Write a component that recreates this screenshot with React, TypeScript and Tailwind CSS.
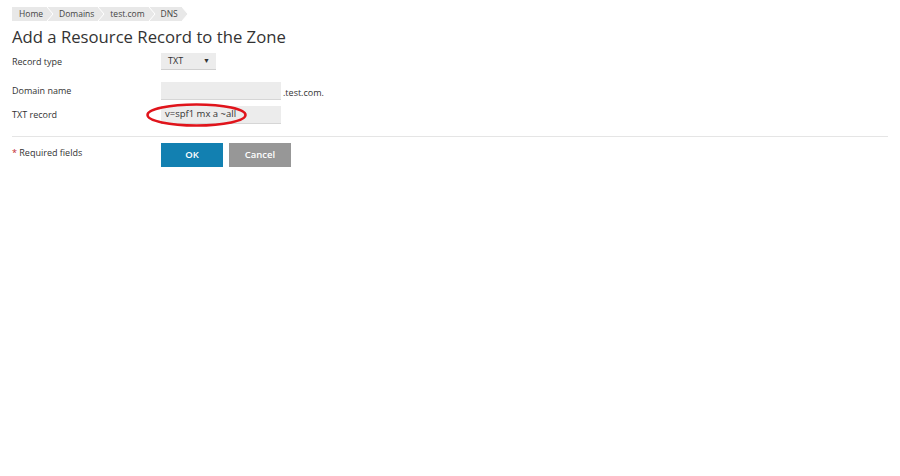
const crumbs = ['Home', 'Domains', 'test.com', 'DNS'];

function Breadcrumbs() {
  return (
    <div className="flex h-[14px] items-stretch">
      {crumbs.map((c, i) => (
        <div key={c} className={'relative flex items-center bg-[#e8e8e8] text-[8.5px] text-[#444] ' + (i === 0 ? 'pl-[7px] pr-[5px]' : 'pl-[11px] pr-[5px]')}>
          {c}
          <svg className="absolute -right-[6px] top-0 z-10" width="7" height="14" viewBox="0 0 7 14">
            <polygon points="0,0 6,7 0,14" fill="#e8e8e8" />
            <polyline points="0,0 6,7 0,14" fill="none" stroke="#fff" strokeWidth="1" />
          </svg>
        </div>
      ))}
    </div>
  );
}

export default function App() {
  return (
    <div className="h-[476px] w-[900px] bg-white px-[12px] pt-[7px] font-['Open_Sans',sans-serif] text-[#333]">
      <Breadcrumbs />
      <h1 className="mt-[4px] text-[16.7px] leading-[24px] text-[#333]">Add a Resource Record to the Zone</h1>

      <div className="mt-[4px] flex items-center">
        <span className="w-[149px] text-[9px]">Record type</span>
        <div className="flex h-[17px] w-[55px] items-center justify-between border-b border-[#d0d0d0] bg-[#ececec] pl-[7px] pr-[6px] text-[9px]">
          TXT
          <span className="text-[7px]">▼</span>
        </div>
      </div>

      <div className="mt-[12px] flex items-center">
        <span className="w-[149px] text-[9px]">Domain name</span>
        <div className="h-[18px] w-[120px] border-b border-[#d6d6d6] bg-[#ececec]" />
        <span className="ml-[2px] mt-[4px] text-[9px]">.test.com.</span>
      </div>

      <div className="mt-[6px] flex items-center">
        <span className="w-[149px] text-[9px]">TXT record</span>
        <div className="relative flex h-[18px] w-[120px] items-center border-b border-[#d6d6d6] bg-[#ececec] pl-[4px] text-[9.5px]">
          v=spf1 mx a ~all
          <svg className="absolute -left-[15px] -top-[3px]" width="101" height="24" viewBox="0 0 101 24">
            <ellipse cx="50.5" cy="12" rx="49" ry="10.5" fill="none" stroke="#e0141b" strokeWidth="2.5" />
          </svg>
        </div>
      </div>

      <div className="mt-[12px] border-t border-[#e5e5e5]" />

      <div className="mt-[6px] flex items-start">
        <span className="mt-[3px] w-[149px] text-[9px]">
          <span className="text-[#c2272d]">*</span> Required fields
        </span>
        <button className="h-[24px] w-[62px] bg-[#1280b1] text-[9.5px] font-semibold text-white">OK</button>
        <button className="ml-[6px] h-[24px] w-[62px] bg-[#979797] text-[9.5px] font-semibold text-white">Cancel</button>
      </div>
    </div>
  );
}
